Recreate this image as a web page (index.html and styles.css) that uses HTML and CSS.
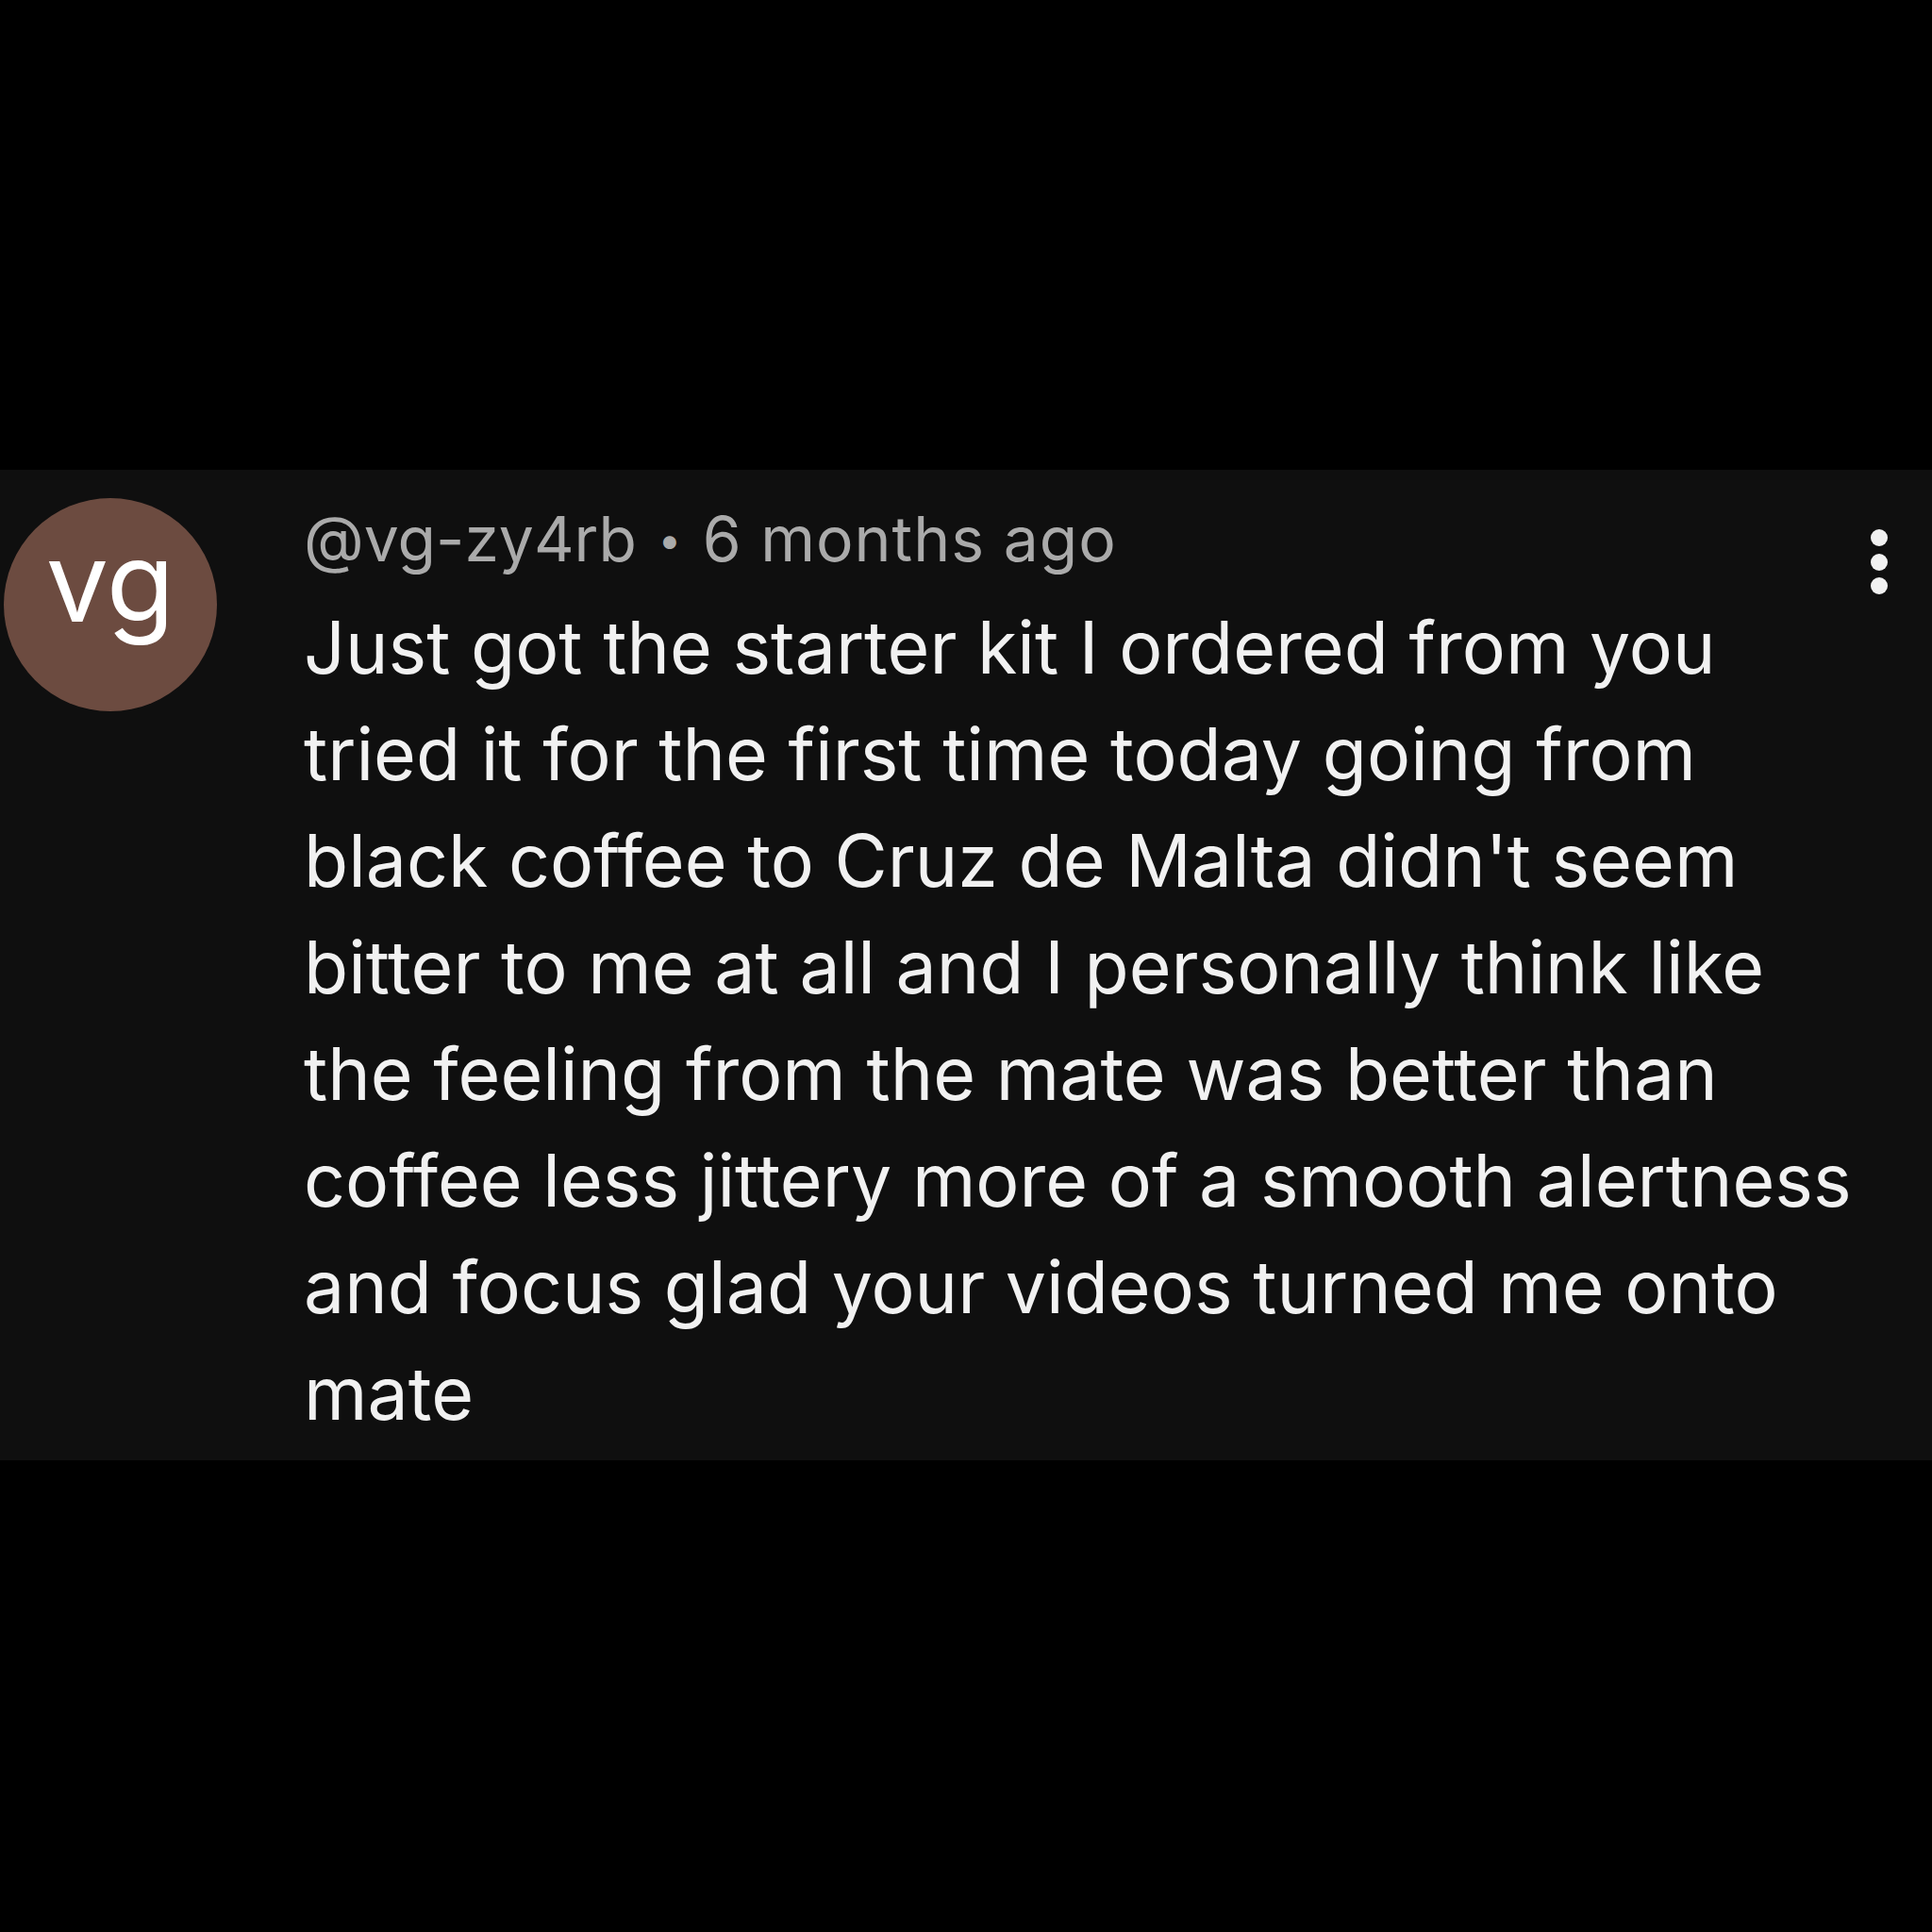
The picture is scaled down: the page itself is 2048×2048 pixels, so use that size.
FILE: index.html
```html
<!DOCTYPE html>
<html>
<head>
<meta charset="utf-8">
<link rel="stylesheet" href="styles.css">
</head>
<body>
<div class="page">
  <div class="comment">
    <div class="avatar">vg</div>
    <div class="content">
      <div class="meta">@vg-zy4rb <span class="dot">•</span> <span class="time">6 months ago</span></div>
      <div class="body">
        <span class="line">Just got the starter kit I ordered from you</span>
        <span class="line">tried it for the first time today going from</span>
        <span class="line">black coffee to Cruz de Malta didn't seem</span>
        <span class="line">bitter to me at all and I personally think like</span>
        <span class="line">the feeling from the mate was better than</span>
        <span class="line">coffee less jittery more of a smooth alertness</span>
        <span class="line">and focus glad your videos turned me onto</span>
        <span class="line">mate</span>
      </div>
    </div>
    <div class="menu">
      <svg width="20" height="70" viewBox="0 0 20 70"><circle cx="10" cy="9" r="9" fill="#f1f1f1"/><circle cx="10" cy="35" r="9" fill="#f1f1f1"/><circle cx="10" cy="60" r="9" fill="#f1f1f1"/></svg>
    </div>
  </div>
</div>
</body>
</html>
```
FILE: styles.css
```css
html, body {
  margin: 0;
  padding: 0;
  background: #000;
}
.page {
  width: 2048px;
  height: 2048px;
  padding-top: 498px;
  box-sizing: border-box;
  font-family: "Inter", "Roboto", sans-serif;
}
.comment {
  background: #0f0f0f;
  height: 1050px;
  display: flex;
  align-items: flex-start;
  box-sizing: border-box;
  padding-top: 30px;
  padding-left: 4px;
}
.avatar {
  width: 226px;
  height: 226px;
  border-radius: 50%;
  background: #6c4b40;
  color: #fff;
  font-size: 118px;
  line-height: 176px;
  text-align: center;
  flex-shrink: 0;
}
.content {
  margin-left: 92px;
  flex: 1;
}
.meta {
  color: #aaaaaa;
  font-size: 66px;
  line-height: 80px;
  margin-top: 3px;
  white-space: nowrap;
}
.meta .dot {
  font-size: 44px;
  vertical-align: 7px;
  margin: 0 4px;
}
.meta .time {
  letter-spacing: 1px;
}
.body {
  color: #f1f1f1;
  font-size: 77px;
  line-height: 113px;
  margin-top: 18px;
}
.line {
  display: block;
  white-space: nowrap;
}
.menu {
  width: 20px;
  margin-right: 46px;
  margin-top: 33px;
  flex-shrink: 0;
}
.menu svg {
  display: block;
}
```
